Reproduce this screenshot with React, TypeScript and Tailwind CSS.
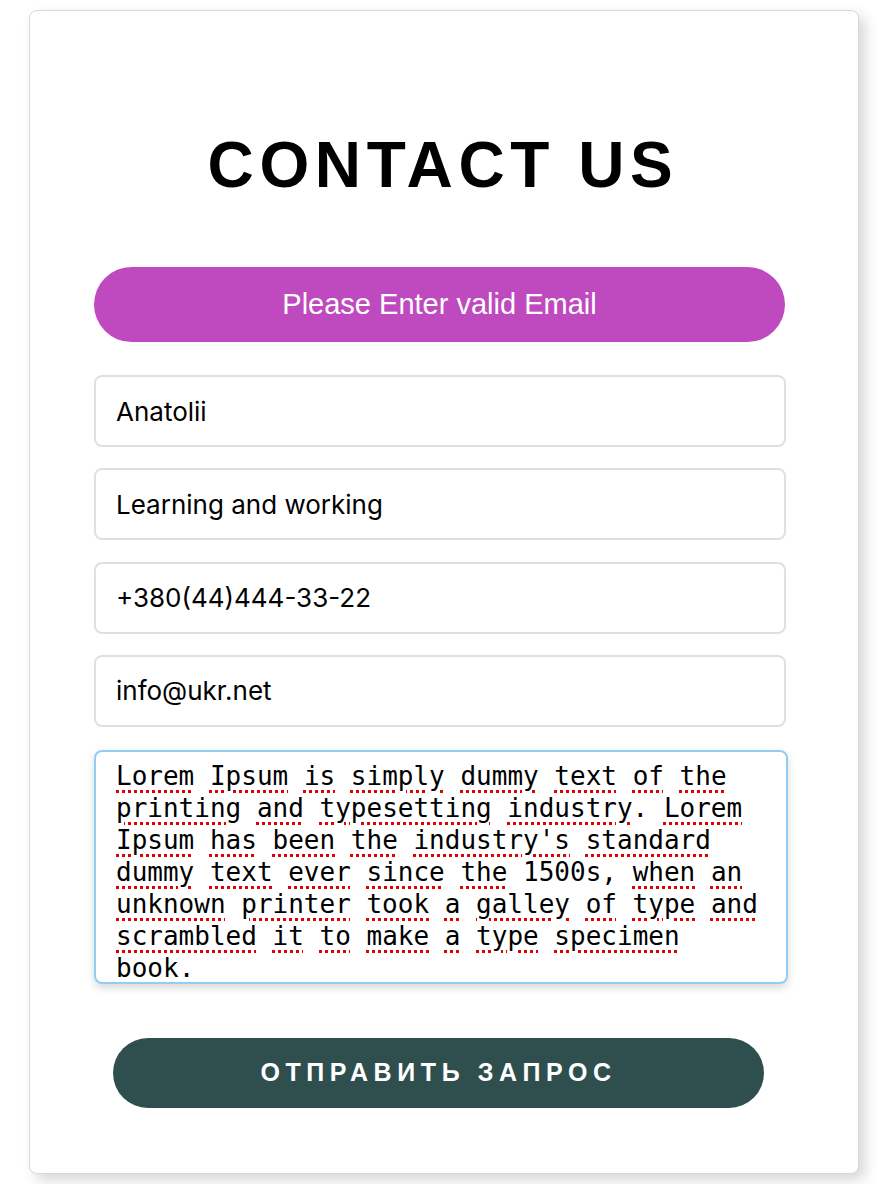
import React from "react";

const LOREM =
  "Lorem Ipsum is simply dummy text of the printing and typesetting industry. Lorem Ipsum has been the industry's standard dummy text ever since the 1500s, when an unknown printer took a galley of type and scrambled it to make a type specimen book.";

function SpellText({ text }: { text: string }) {
  const tokens = text.split(" ");
  return (
    <>
      {tokens.map((tok, i) => {
        const m = tok.match(/^([A-Za-z']+)([.,]?)$/);
        const sep = i < tokens.length - 1 ? " " : "";
        if (!m || tok === "1500s,") {
          return (
            <span key={i}>
              {tok}
              {sep}
            </span>
          );
        }
        return (
          <span key={i}>
            <span className="underline decoration-dotted decoration-[#e00000] decoration-[3px] underline-offset-[5px]">
              {m[1]}
            </span>
            {m[2]}
            {sep}
          </span>
        );
      })}
    </>
  );
}

function Field({ value }: { value: string }) {
  return (
    <div className="h-[72px] w-[692px] rounded-[8px] border-2 border-[#e0e0e0] bg-white flex items-center pl-[20px] text-[26px] text-black font-['Inter',sans-serif]">
      {value}
    </div>
  );
}

export default function App() {
  return (
    <div className="min-h-[1184px] bg-white pt-[10px] pl-[29px]">
      <div className="w-[830px] h-[1164px] rounded-[8px] border border-[#d8d8d8] bg-white shadow-[6px_6px_14px_rgba(0,0,0,0.16)] pl-[64px] pt-[117px] flex flex-col">
        <h1 className="w-[692px] pl-[6px] text-center text-[64px] leading-[74px] font-bold tracking-[5.6px] text-black font-['Liberation_Sans',Arial,sans-serif]">
          CONTACT US
        </h1>
        <div className="mt-[65px] h-[75px] w-[691px] rounded-full bg-[#bf4ac0] flex items-center justify-center text-white text-[29px] font-['Liberation_Sans',Arial,sans-serif]">
          Please Enter valid Email
        </div>
        <div className="mt-[33px] flex flex-col gap-[21.3px]">
          <Field value="Anatolii" />
          <Field value="Learning and working" />
          <Field value="+380(44)444-33-22" />
          <Field value="info@ukr.net" />
        </div>
        <div className="mt-[23px] h-[234px] w-[694px] rounded-[8px] border-2 border-[#92cdf6] bg-white shadow-[0_4px_8px_rgba(0,0,0,0.15)] overflow-hidden pl-[20px] pr-[20px] pt-[8px] text-[26px] leading-[32px] text-black font-['DejaVu_Sans_Mono',monospace]">
          <SpellText text={LOREM} />
        </div>
        <button className="mt-[54px] ml-[19px] h-[70px] w-[651px] rounded-full bg-[#2f4f4f] text-white text-[25px] font-bold tracking-[5.6px] font-['Liberation_Sans',Arial,sans-serif] flex items-center justify-center">
          ОТПРАВИТЬ ЗАПРОС
        </button>
      </div>
    </div>
  );
}
